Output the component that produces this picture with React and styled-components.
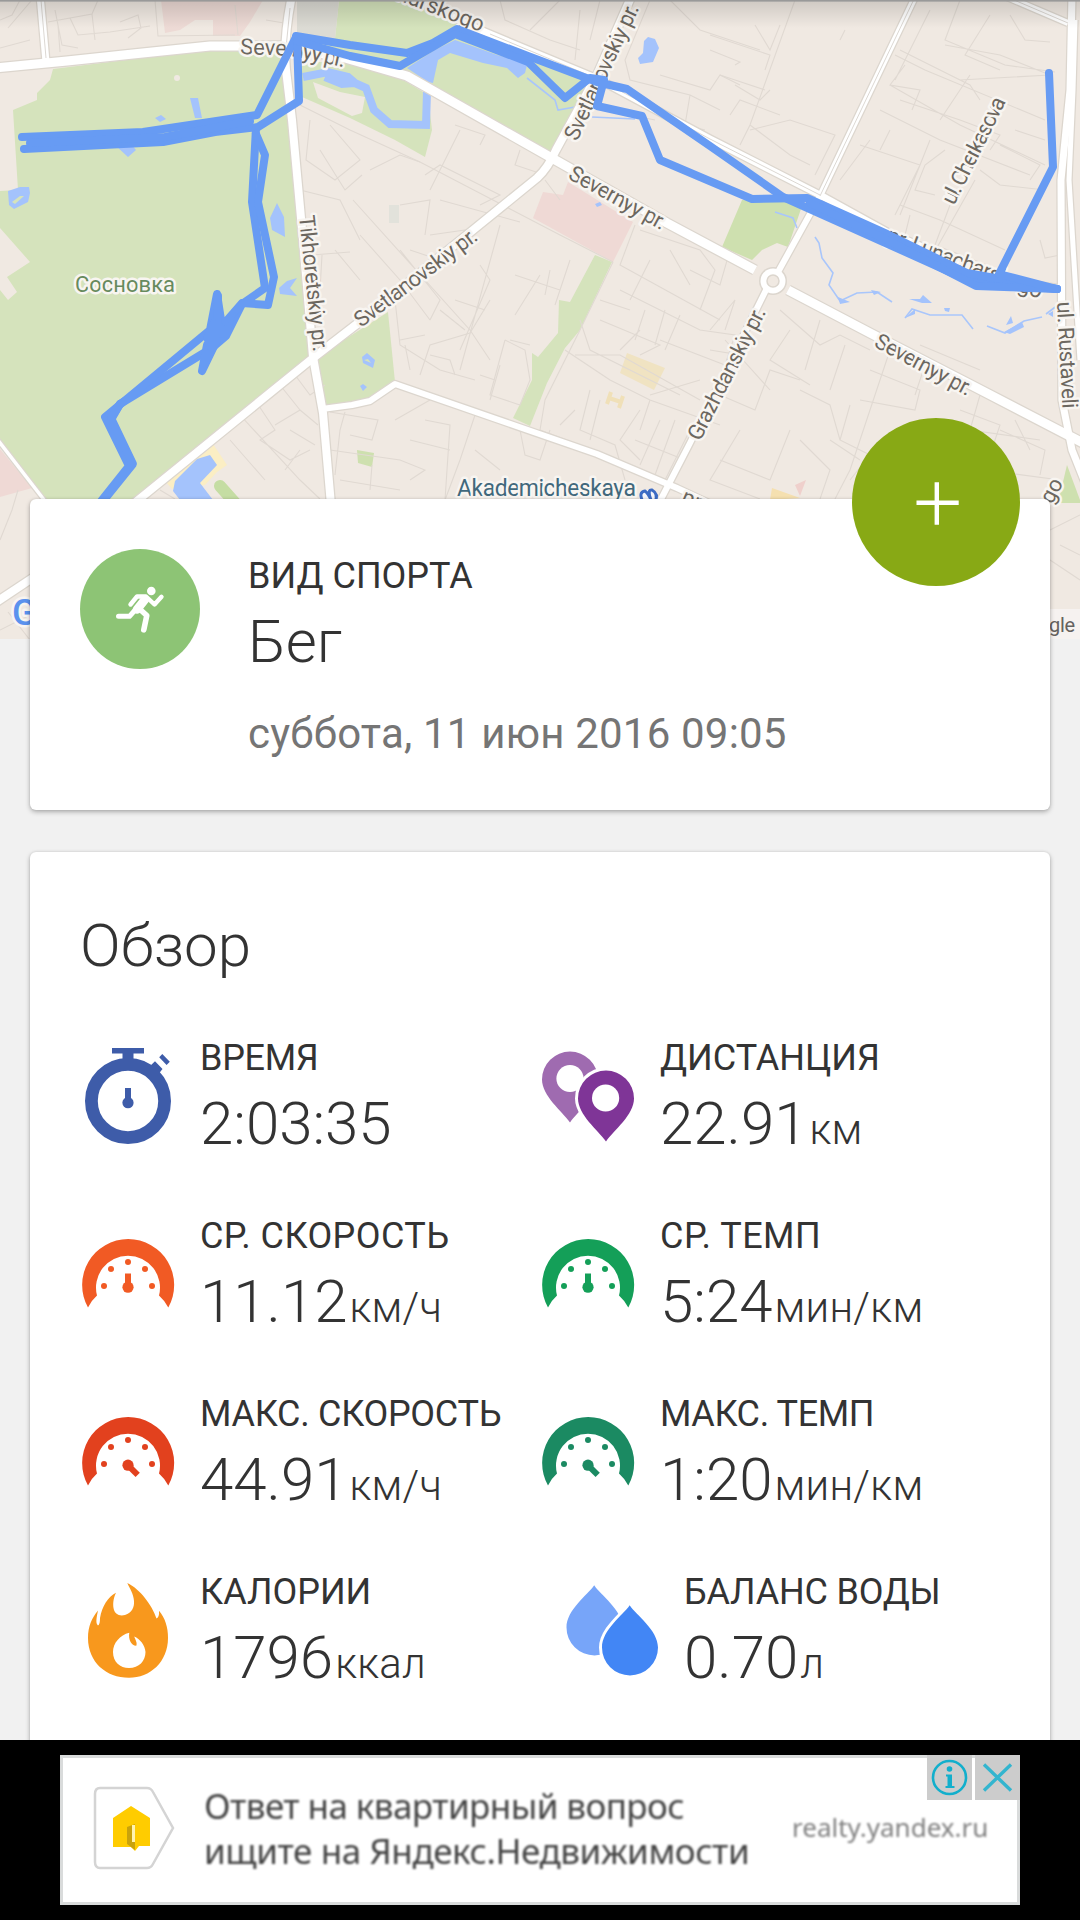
import React from "react";
import styled, { createGlobalStyle } from "styled-components";

const GlobalStyle = createGlobalStyle`
  * { box-sizing: border-box; }
  body { margin: 0; background: #f1f1f1; font-family: Roboto, "Noto Sans", sans-serif; }
`;

const Screen = styled.div`
  width: 1080px;
  height: 1920px;
  display: flex;
  flex-direction: column;
  overflow: hidden;
  background: #f1f1f1;
  color: #333;
`;

const Content = styled.main`
  height: 1740px;
  overflow: hidden;
  display: flex;
  flex-direction: column;
`;

const MapArea = styled.div`
  flex: none;
  height: 639px;
  overflow: hidden;
  svg { display: block; }
`;

const Card = styled.section`
  position: relative;
  flex: none;
  margin: 0 30px;
  background: #fff;
  border-radius: 6px;
  box-shadow: 0 2px 5px rgba(0, 0, 0, 0.28), 0 0 3px rgba(0, 0, 0, 0.1);
`;

const SportCard = styled(Card)`
  display: flex;
  gap: 48px;
  height: 311px;
  margin-top: -140px;
  padding: 50px;
`;

const OverviewCard = styled(Card)`
  height: 960px;
  margin-top: 42px;
  padding: 59px 50px;
  display: flex;
  flex-direction: column;
  gap: 56px;
`;

const SportBadge = styled.div`
  flex: none;
  width: 120px;
  height: 120px;
  border-radius: 50%;
  background: #8dc475;
  svg { display: block; }
`;

const SportText = styled.div`
  display: flex;
  flex-direction: column;
  padding-top: 6px;
`;

const Label = styled.div`
  font-size: 36px;
  line-height: 42px;
  letter-spacing: ${(p) => p.$spacing || 0}px;
  white-space: nowrap;
`;

const Value = styled.div`
  margin-top: 10px;
  font-size: 60px;
  line-height: 70px;
  font-weight: 300;
  white-space: nowrap;
`;

const Unit = styled.span`
  font-size: 42px;
  margin-left: 2px;
  letter-spacing: 0.3px;
`;

const DateLine = styled.div`
  margin-top: 32px;
  font-size: 42px;
  line-height: 49px;
  letter-spacing: 0.2px;
  color: #757575;
  white-space: nowrap;
`;

const Title = styled.h2`
  margin: 0;
  font-size: 60px;
  line-height: 70px;
  font-weight: 300;
`;

const Stats = styled.div`
  display: grid;
  grid-template-columns: 460px 460px;
  row-gap: 56px;
`;

const Stat = styled.div`
  display: flex;
  gap: 24px;
  height: 122px;
  padding-left: ${(p) => p.$indent || 0}px;
`;

const StatIcon = styled.svg`
  flex: none;
  width: 96px;
  height: 96px;
  margin-top: 11px;
`;

const AddButton = styled.button`
  position: absolute;
  top: -81px;
  right: 30px;
  width: 168px;
  height: 168px;
  padding: 0;
  border: 0;
  border-radius: 50%;
  background: #88a915;
  svg { display: block; }
`;

const AdBar = styled.aside`
  flex: none;
  height: 180px;
  padding: 15px 60px;
  background: #000;
`;

const Ad = styled.div`
  position: relative;
  display: flex;
  align-items: center;
  height: 150px;
  padding: 0 0 5px 30px;
  background: #fff;
  border: 3px solid #d9dbdb;
  font-family: "Noto Sans", "Open Sans", sans-serif;
`;

const AdLogo = styled.svg`
  flex: none;
  width: 82px;
  height: 84px;
  filter: blur(0.6px);
`;

const AdText = styled.div`
  width: 588px;
  margin-left: 29px;
  font-size: 35px;
  line-height: 45px;
  color: #444;
  white-space: nowrap;
  filter: blur(0.8px);
`;

const AdLine = styled.div`
  letter-spacing: ${(p) => p.$spacing}px;
`;

const AdLink = styled.div`
  font-size: 26px;
  line-height: 34px;
  padding-bottom: 2px;
  color: #808080;
  filter: blur(0.8px);
`;

const AdChoices = styled.div`
  position: absolute;
  top: -3px;
  right: -3px;
  display: flex;
  gap: 3px;
`;

const AdChoice = styled.svg`
  display: block;
  width: 45px;
  height: 45px;
  background: #ccc;
`;

const MINOR = [
  "M0 20L12 15L20 0M8 28L32 0M0 48L30 40M55 10L62 45L78 48M48 22L92 14L98 0M70 18L78 35L110 32M92 14L95 40M120 22L138 15L141 28L128 38M110 32L150 26M60 52L58 25",
  "M155 0L158 36L235 35M235 5L238 35M266 20L290 24",
  "M300 105L350 130L420 162L560 235L613 262M310 120L306 160L335 180L360 160L330 125M320 150L345 190L362 175M300 190L340 200L360 240M312 255L350 252M322 255L320 290M335 250L360 280",
  "M353 200L470 330L490 360M370 170L400 155L420 162M360 235L400 280L430 320M400 205L430 200L425 235M425 175L440 165L500 195L480 205M440 200L520 222M430 235L465 230L440 260L410 250M500 225L460 370M460 130L430 190M455 125L485 135L480 145M520 150L515 165L545 175M545 180L560 200M480 265L490 280L460 350M400 250L420 275L440 300L430 320",
  "M395 300L400 345L440 370L475 380M420 375L430 345L470 333L490 300M430 355L450 360L455 375M400 340L425 335M440 310L465 330M405 345L410 370M455 300L485 310",
  "M515 275L560 290L555 305M540 275L515 315M550 270L545 295M570 260L560 290M505 340L525 350L530 380L520 405L490 395L505 340M500 365L490 400M510 340L530 345M480 375L495 380",
  "M613 262L580 330L545 400L540 430M635 225L620 265L720 320M640 230L700 250L715 270L700 310M620 290L700 330L735 335L725 365L660 340M600 320L660 345L640 355M580 320L590 350L680 395M575 355L620 355L700 400M650 260L630 300M670 250L690 285M690 270L720 285L730 250M640 330L620 350M600 300L630 310M645 310L635 340M665 310L655 345M680 315L665 350",
  "M565 350L610 380L650 400L720 425M590 390L580 430L615 445L625 480M600 400L590 440M640 410L620 440L640 460M650 400L640 430M660 420L640 465M675 420L655 475M690 430L665 480M635 440L685 460M575 410L560 425M540 430L580 445L600 455M700 380L650 395",
  "M330 412L378 420L372 440L350 435M345 412L340 430L335 475M330 450L400 460L425 470L410 480M425 420L450 425L445 500M475 415L460 460L445 500M395 420L430 400M410 440L450 450M520 430L525 455L540 460L550 430M340 480L400 490M475 450L500 470M370 490L372 465",
  "M240 415L300 480L320 499M255 400L275 430L260 440L290 460L310 450M280 385L300 410L275 425M295 375L310 395L325 385M230 440L265 480M290 430L315 445M300 410L318 425M285 470L300 450",
  "M500 0L505 20L550 40L580 50M530 30L560 0M580 10L575 60M600 0L590 40M650 0L625 60L630 80L690 95L720 110M670 0L700 30L760 50M660 75L710 90L720 75L740 85M690 95L685 125L705 130M630 115L655 120",
  "M710 35L770 55L765 70M755 25L770 50L780 25M720 75L765 90M795 0L750 125L740 145M730 115L740 100L780 115M750 125L790 155L810 165M735 85L760 100L770 90M750 130L790 120L835 135L815 175M710 50L740 62L735 65M840 40L845 30",
  "M900 50L960 80L1050 75M930 10L895 80M960 0L945 40L1005 65L1055 72M990 15L965 55L1000 70M890 85L960 125L1045 165M905 65L890 85L920 90L912 110M945 45L1000 55L1050 75M970 75L940 120M1010 15L1025 40L1050 42M895 55L925 70L1045 120M920 60L970 85L980 100M860 145L920 165L895 215M880 110L940 140L1030 175M900 100L960 120M945 150L925 165L915 190L935 195M960 120L1000 135L990 150M930 140L900 215M1000 145L1040 165L1030 180M980 170L1000 185L1045 190M870 140L840 180M890 130L880 150M975 180L930 260M900 205L940 220L1005 250M950 205L935 245L1000 270M910 215L905 235L925 245M1040 240L1045 258L1060 255M1015 130L1045 140",
  "M710 330L735 300L725 330M725 340L770 390M710 350L740 355L720 395L755 410L770 370L800 380M780 310L820 345L840 335L870 350M790 330L770 360L810 385M820 320L805 370M845 345L830 390M890 350L850 470L835 499M870 370L920 390L915 410L860 400M900 350L925 365L915 395M850 405L840 440L870 455L850 480M800 390L830 405L840 440M740 430L710 480L760 499M790 430L770 480L720 460M800 440L830 470L820 499M830 440L860 460M920 345L980 370M980 395L970 430L1040 440M1000 430L1045 450L1040 475M1015 420L1030 450M960 410L1000 425L985 470L1060 480",
  "M1050 530L1080 515M1050 560L1080 580M1060 545L1080 555M0 540L12 510L18 490M0 630L30 615M8 612L30 640M160 490L175 499",
];

const ROADS = [
  { d: "M-5 68L67 61L133 54L210 46L283 46L345 58L407 76L550 157L667 223L755 270M788 290L870 333L977 388L1085 444", w: 9 },
  { d: "M292 -5Q283 40 286 70L292 120L303 240L313 357L323 413L331 505", w: 8 },
  { d: "M132 505L313 358L357 324L473 230L537 178Q548 168 556 150L597 75L632 -5", w: 8 },
  { d: "M400 -8L480 30L600 80L710 139L820 195L887 232L1000 280L1062 289", w: 7 },
  { d: "M916 -5L820 196L778 272M766 290L690 443L658 505", w: 6 },
  { d: "M322 409L352 405L370 401L395 384L597 454L677 488L720 508", w: 6 },
  { d: "M1072 -5L1070 90L1061 180L1062 400L1072 450L1088 490", w: 7 },
  { d: "M1075 20L1073 90L1069 180L1080 360", w: 5 },
  { d: "M1000 -6L1068 23", w: 6 },
  { d: "M40 -5L46 62", w: 7 },
  { d: "M-3 439L48 505", w: 3.5 },
  { d: "M-5 603L40 573", w: 8 },
];

const ROUTES = [
  "M22 137L143 132L257 115L296 37",
  "M24 149L163 142L215 132L258 127L299 101L297 38",
  "M30 143L165 137L250 121",
  "M296 36L350 45L407 53L433 43L457 29L528 56L597 82L627 89L710 146L783 197L970 281L1057 289",
  "M297 41L350 56L400 66L455 34L528 62L565 98L590 78L604 80L597 106L642 116L660 160L752 199L807 198L887 234L967 273L1057 289",
  "M810 203L887 240L976 286L1057 289",
  "M1049 73L1053 167L999 274L1057 289",
  "M256 128L252 202L265 288L242 304L226 336L212 348L120 404L112 418",
  "M256 134L265 155L258 202L274 277L268 305L242 303L222 326L217 294L210 330L105 417L129 466L98 505",
  "M218 296L217 340L202 371L207 345",
  "M120 404L111 418L133 464L104 500",
];

function MapLabel({ x, y, angle, length, size = 22, weight, color = "#6c675f", anchor, children }) {
  return (
    <text
      x={x} y={y} fontSize={size} fontWeight={weight} fill={color} textLength={length} textAnchor={anchor}
      transform={`rotate(${angle || 0} ${x} ${y})`}
      stroke="#f8f5f1" strokeWidth="5" strokeLinejoin="round" paintOrder="stroke"
    >
      {children}
    </text>
  );
}

function RouteMap() {
  return (
    <svg width="1080" height="639" viewBox="0 0 1080 639" fontFamily="Roboto, sans-serif">
      <defs>
        <linearGradient id="topShade" x1="0" y1="0" x2="0" y2="1">
          <stop offset="0" stopColor="#000" stopOpacity="0.14" />
          <stop offset="1" stopColor="#000" stopOpacity="0" />
        </linearGradient>
      </defs>
      <rect width="1080" height="639" fill="#f0e9e2" />

      <g fill="#d5e3bc">
        <path d="M53 69L150 57L215 50L286 50L303 240L313 357L136 500L45 500L0 441V290L8 300L17 292L7 277L30 262L0 228V191L18 190L13 110L37 100L37 93L50 80Z" />
        <path d="M339 0L405 0L480 34L592 80L560 140L549 153L407 76L345 58L297 45L297 36L335 38Z" />
        <path d="M296 62L350 62L400 78L428 95L432 130L425 157L395 140L350 118L302 97Z" />
        <path d="M595 255L612 262L580 330L565 348L547 383L530 426L513 418L532 380L532 353L538 357L558 333L559 300L570 302Z" />
        <path d="M317 357L388 312L395 382L367 402L325 406Z" />
      </g>
      <path d="M313 82L340 92L365 97L362 113L352 116L318 98Z" fill="#f0e9e2" />
      <g fill="#cee0af">
        <path d="M742 200L803 203L788 247L777 243L762 250L752 260L722 247Z" />
        <path d="M357 450L374 453L372 467L358 463Z" />
        <path d="M1067 465L1080 500V503H1058Z" />
      </g>
      <path d="M297 0H339L335 39L297 33Z" fill="#dcdbd4" />
      <path d="M161 0H263L250 22L240 36H213V20H195L180 30L165 33Z" fill="#eddad5" />
      <path d="M543 192L563 195L568 182L633 222L613 262L533 218Z" fill="#efd9d5" />
      <path d="M0 449L32 488L0 497Z" fill="#efd9d5" />
      <path d="M795 485L806 480L800 496Z" fill="#efd0cc" />
      <path d="M627 353L665 368L654 390L620 373Z" fill="#f0e3c2" />
      <path d="M611 392L607 404M623 396L619 408M609 398L621 402" stroke="#f0e0b8" strokeWidth="4" />
      <path d="M772 488L800 498L770 500Z" fill="#f5e0b0" />
      <path d="M213 444L227 465L217 472L205 485L172 489L166 482Z" fill="#fbeec4" />
      <path d="M389 205h10v18h-10z" fill="#e2e2db" />
      <circle cx="177" cy="78" r="3" fill="#f0e9e2" />

      <g fill="none" stroke="#e0d9d2" strokeWidth="1.1">
        {MINOR.map((d) => <path key={d} d={d} />)}
      </g>

      <path d="M220 486L236 504" stroke="#c5dda3" strokeWidth="12" strokeLinecap="round" />
      <g fill="#a4c3fc">
        <path d="M407 68L435 50L455 40L475 47L497 55L517 60L527 65L525 73L518 78L507 68L483 63L450 53L438 60L433 83L428 82Z" />
        <path d="M648 37L655 39L659 48L653 62L640 64L638 58L643 53L644 41Z" />
        <path d="M210 455L217 465L200 483L213 500H180L173 491L175 481L197 459Z" />
        <path d="M190 98H198L202 118H195ZM155 118L161 115L166 119L160 122ZM115 145L130 143L136 150L128 157Z" />
        <path d="M8 191L20 187L29 187L30 193L28 202L14 209L9 205Z" />
        <path d="M277 203L284 217L285 237L272 230L270 218ZM297 278L290 288L297 296L280 294L279 288L287 281Z" />
        <path d="M362 357L367 353L375 360L373 368L363 363ZM360 386L363 384L367 387L363 391Z" />
        <path d="M595 204L600 202L602 205L597 207Z" />
      </g>
      <path d="M364 360L368 359L371 363Z" fill="#d5e3bc" />
      <path d="M12 202L20 196L24 196L15 204Z" fill="#d5e3bc" />
      <path d="M303 77L328 72L348 77L355 83L342 84L325 77M348 80L366 88L374 110L390 124L426 125L427 92" fill="none" stroke="#a4c3fc" strokeWidth="8" />
      <g fill="none" stroke="#a9c6fb" strokeWidth="1.6">
        <path d="M527 78L555 100L558 110L575 107M592 117L635 119M775 212L793 218L797 228" />
        <path d="M815 237L819 243L822 258L833 273L829 285L840 301L857 293L877 292L892 302" />
        <path d="M905 318L912 309L930 315L962 315L973 329M987 326L1005 333L1024 321L1042 317M1046 314L1062 302" />
      </g>
      <g fill="#a4c3fc">
        <path d="M838 297L850 302L840 304ZM871 290L881 292L874 295ZM909 299L920 299L923 295L932 303L922 303ZM905 318L915 309L915 314ZM944 308L950 308L949 312L945 311ZM1011 316L1006 325L1013 323ZM1004 332L1022 322L1024 327L1010 334ZM1048 314L1053 311L1053 317Z" />
      </g>

      {ROADS.map((r) => <path key={r.d} d={r.d} fill="none" stroke="#dcd6ce" strokeWidth={r.w + 2.5} strokeLinejoin="round" />)}
      <circle cx="773" cy="281" r="14" fill="#dcd6ce" />
      {ROADS.map((r) => <path key={r.d} d={r.d} fill="none" stroke="#fff" strokeWidth={r.w} strokeLinejoin="round" />)}
      <circle cx="773" cy="281" r="12.5" fill="#fff" />
      <circle cx="773" cy="281" r="6" fill="#f0e9e2" stroke="#dcd6ce" strokeWidth="1.5" />
      <path d="M41 0L46 58M290 8L286 48M916 -5L820 196M490 34L600 80L710 139L820 195M1000 -6L1068 23" fill="none" stroke="#dcd8d3" strokeWidth="1" />

      <MapLabel x={240} y={54} angle={2} length={54}>Sever</MapLabel>
      <MapLabel x={291} y={56} angle={12} length={54}>nyy pr.</MapLabel>
      <MapLabel x={299} y={216} angle={84} length={137}>Tikhoretskiy pr.</MapLabel>
      <MapLabel x={361} y={328} angle={-37} length={148}>Svetlanovskiy pr.</MapLabel>
      <MapLabel x={577} y={142} angle={-65} length={148}>Svetlanovskiy pr.</MapLabel>
      <MapLabel x={567} y={178} angle={29} length={108}>Severnyy pr.</MapLabel>
      <MapLabel x={873} y={346} angle={28} length={107}>Severnyy pr.</MapLabel>
      <MapLabel x={700} y={442} angle={-63} length={146}>Grazhdanskiy pr.</MapLabel>
      <MapLabel x={954} y={206} angle={-63.5} length={117}>ul. Cherkasova</MapLabel>
      <MapLabel x={885} y={241} angle={20.5} length={165}>pr. Lunacharskogo</MapLabel>
      <MapLabel x={1057} y={302} angle={87} length={107}>ul. Rustaveli</MapLabel>
      <MapLabel x={481} y={32} angle={21} anchor="end">Lunacharskogo</MapLabel>
      <MapLabel x={1052} y={505} angle={-62}>go</MapLabel>
      <MapLabel x={680} y={502} angle={24}>pr.</MapLabel>
      <MapLabel x={75} y={292} length={100} size={22} color="#678a5d">Сосновка</MapLabel>
      <MapLabel x={457} y={496} length={179} size={23} color="#41687c">Akademicheskaya</MapLabel>
      <circle cx="649" cy="500" r="10" fill="#f5f6fb" />
      <path d="M643 502Q638 492 645 491Q648 493 651 500Q647 489 652 490Q659 494 655 502" fill="none" stroke="#3d6cc4" strokeWidth="3" />

      <g fill="none" stroke="#679bf3" strokeWidth="8" strokeLinejoin="round" strokeLinecap="round">
        {ROUTES.map((d) => <path key={d} d={d} />)}
      </g>
      <path d="M212 318L226 326L236 311L229 338L220 337L208 350L203 338Z" fill="#679bf3" />

      <MapLabel x={12} y={625} size={36} weight={500} color="#5b92ee">G</MapLabel>
      <rect x="1040" y="609" width="40" height="30" fill="#f6f2f0" />
      <text x="1049" y="632" fontSize="20" fill="#65625f" textLength="26">gle</text>
      <rect width="1080" height="28" fill="url(#topShade)" />
      <rect width="1080" height="1.6" fill="#999" />
    </svg>
  );
}

function Stopwatch() {
  return (
    <StatIcon viewBox="0 0 96 96" fill="#3e5ca9">
      <circle cx="48" cy="53" r="36.6" fill="none" stroke="#3e5ca9" strokeWidth="12.8" />
      <path d="M32 0H64V5.5H53.5V13H42.5V5.5H32ZM75 13.3L82.5 21L77 28L68 20ZM82.3 6L89.8 13.7L86.6 17L79.2 9.2ZM45 40H51V53H45Z" />
      <circle cx="48" cy="54.7" r="5.6" />
    </StatIcon>
  );
}

function Gauge({ color, max }) {
  return (
    <StatIcon viewBox="0 0 96 96" fill={color}>
      <path d="M8 81.5A46 46 0 1 1 88.3 81.5Q85 75 79 69.6A32 32 0 1 0 17 69.6Q11 75 8 81.5Z" />
      <circle cx="24" cy="60" r="3" />
      <circle cx="31" cy="43" r="3" />
      <circle cx="48" cy="36" r="3" />
      <circle cx="65" cy="43" r="3" />
      <circle cx="72" cy="60" r="3" />
      <circle cx="48" cy="61.2" r="5.6" />
      <path d="M45 47.5H51V60H45Z" transform={max ? "rotate(135 48 61.2)" : undefined} />
    </StatIcon>
  );
}

const PIN = "M66 93.5C58 82 38 67 38 50.5A28 28 0 0 1 94 50.5C94 67 74 82 66 93.5Z";

function Pins() {
  return (
    <StatIcon viewBox="0 0 96 96">
      <path d={PIN} transform="translate(-36 -19)" fill="#9f6bb0" />
      <circle cx="30" cy="30.5" r="13.6" fill="#fff" />
      <path d={PIN} fill="#7f3597" stroke="#fff" strokeWidth="6" paintOrder="stroke" />
      <circle cx="65.6" cy="50" r="13.6" fill="#fff" />
    </StatIcon>
  );
}

function Flame() {
  return (
    <StatIcon viewBox="0 0 96 96">
      <path fill="#f8981d" d="M47.3 1C60 7 72 23 76.5 36.5Q79.5 35 79 28.8C85 36 88 45 88 56C88 80 70 95.8 49 95.8C26 95.8 8 80 8 56C8 44 12 36 18 28.5C17 34 15 41 18 43.5Q20 43 20 36C22 24 28 15 36 10.7C33 17 33 22 33.5 26C34.5 32 39 34.5 45 33C52 31 54.5 25 54 19C53.7 12 49.5 6 47.3 1Z" />
      <path fill="#fff" d="M49.3 50.7C40 53 33 61 33 70C33 80 40 86 49 86C59 86 65.5 79 65.5 70C65 63 60 57 54.2 54.5C55.5 58 57.5 61 56.3 63.7C52 64 48 58 49.3 50.7Z" />
    </StatIcon>
  );
}

const DROP = "M65.7 23.3C72 33 94 48 94 65.5A28 28 0 0 1 38 65.5C38 48 59 33 65.7 23.3Z";

function Drops() {
  return (
    <StatIcon viewBox="0 0 96 96">
      <path d={DROP} transform="translate(-35.5 -20)" fill="#77a5f9" />
      <path d={DROP} fill="#4286f5" stroke="#fff" strokeWidth="6" paintOrder="stroke" />
    </StatIcon>
  );
}

function Runner() {
  return (
    <svg width="120" height="120" viewBox="0 0 120 120" fill="none" stroke="#fff" strokeLinecap="round" strokeLinejoin="round">
      <circle cx="71.3" cy="42" r="4.3" fill="#fff" stroke="none" />
      <path d="M50.5 55.5L57 47.5H66L74.5 55.5L81.5 47.8" strokeWidth="4.4" />
      <path d="M65 50.5L57 60.5" strokeWidth="8.5" />
      <path d="M56 60L49.5 67.3H38.5" strokeWidth="5" />
      <path d="M59 59.5L66.8 66.5L63.8 80.8" strokeWidth="5.6" />
    </svg>
  );
}

const STATS = [
  { label: "ВРЕМЯ", spacing: -0.3, value: "2:03:35", icon: <Stopwatch /> },
  { label: "ДИСТАНЦИЯ", spacing: 0, value: "22.91", unit: "км", icon: <Pins /> },
  { label: "СР. СКОРОСТЬ", spacing: 0.42, value: "11.12", unit: "км/ч", icon: <Gauge color="#f15a24" /> },
  { label: "СР. ТЕМП", spacing: 0.5, value: "5:24", unit: "мин/км", icon: <Gauge color="#149f58" /> },
  { label: "МАКС. СКОРОСТЬ", spacing: -0.28, value: "44.91", unit: "км/ч", icon: <Gauge color="#e2411e" max /> },
  { label: "МАКС. ТЕМП", spacing: -0.4, value: "1:20", unit: "мин/км", icon: <Gauge color="#1b8a62" max /> },
  { label: "КАЛОРИИ", spacing: 0, value: "1796", unit: "ккал", icon: <Flame /> },
  { label: "БАЛАНС ВОДЫ", spacing: -0.2, value: "0.70", unit: "л", icon: <Drops />, indent: 24 },
];

export default function App() {
  return (
    <Screen>
      <GlobalStyle />
      <Content>
        <MapArea><RouteMap /></MapArea>
        <SportCard>
          <SportBadge><Runner /></SportBadge>
          <SportText>
            <Label>ВИД СПОРТА</Label>
            <Value>Бег</Value>
            <DateLine>суббота, 11 июн 2016 09:05</DateLine>
          </SportText>
          <AddButton aria-label="+">
            <svg width="168" height="168" viewBox="0 0 168 168">
              <path d="M64.5 84.8H106.7M84.8 64.3V106.7" stroke="#fff" strokeWidth="4.4" />
            </svg>
          </AddButton>
        </SportCard>
        <OverviewCard>
          <Title>Обзор</Title>
          <Stats>
            {STATS.map((s) => (
              <Stat key={s.label} $indent={s.indent}>
                {s.icon}
                <div>
                  <Label $spacing={s.spacing}>{s.label}</Label>
                  <Value>{s.value}{s.unit && <Unit>{s.unit}</Unit>}</Value>
                </div>
              </Stat>
            ))}
          </Stats>
        </OverviewCard>
      </Content>
      <AdBar>
        <Ad>
          <AdLogo viewBox="0 0 82 84">
            <path d="M7 2H54Q58 2 60 6L80 42L60 78Q58 82 54 82H7Q2 82 2 76V8Q2 2 7 2Z" fill="#fff" stroke="#d4d4d4" strokeWidth="2.5" />
            <path d="M20 32L38 20L57 32V60H46L42 65L38 61H20Z" fill="#fc0" />
            <path d="M34 41L42 38V64L34 58Z" fill="#c9a20c" />
            <path d="M39 39H42V56H39Z" fill="#fff3b0" />
          </AdLogo>
          <AdText>
            <AdLine $spacing={-0.58}>Ответ на квартирный вопрос</AdLine>
            <AdLine $spacing={-0.42}>ищите на Яндекс.Недвижимости</AdLine>
          </AdText>
          <AdLink>realty.yandex.ru</AdLink>
          <AdChoices>
            <AdChoice viewBox="0 0 45 45">
              <circle cx="22.5" cy="22.5" r="16.5" fill="none" stroke="#12afcc" strokeWidth="2.6" />
              <circle cx="22.5" cy="14" r="2.8" fill="#12afcc" />
              <path d="M19 19.5H25V31H27.5V33H18.5V31H20.5V21.5H19Z" fill="#12afcc" />
            </AdChoice>
            <AdChoice viewBox="0 0 45 45">
              <path d="M9 9.5L36 35.5M36 9.5L9 35.5" stroke="#33b5cf" strokeWidth="3.4" />
            </AdChoice>
          </AdChoices>
        </Ad>
      </AdBar>
    </Screen>
  );
}
